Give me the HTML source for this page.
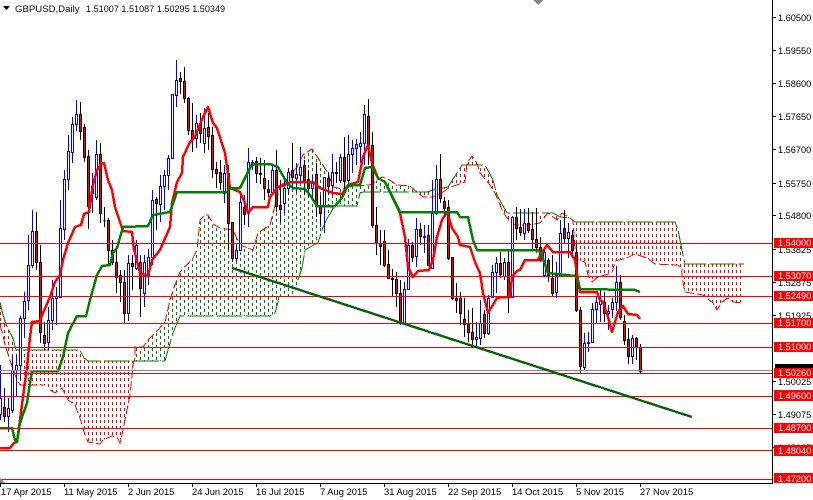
<!DOCTYPE html>
<html><head><meta charset="utf-8"><style>
html,body{margin:0;padding:0;background:#fff;width:813px;height:500px;overflow:hidden}
svg{display:block;font-family:"Liberation Sans",sans-serif}
</style></head><body>
<svg width="813" height="500" viewBox="0 0 813 500" xmlns="http://www.w3.org/2000/svg">
<defs>
<pattern id="pr" patternUnits="userSpaceOnUse" width="4" height="6"><rect x="0" y="0" width="1" height="3" fill="#f00"/></pattern>
<pattern id="pg" patternUnits="userSpaceOnUse" width="8" height="6"><rect x="0" y="0" width="1" height="3" fill="#008000"/><rect x="4" y="3" width="1" height="3" fill="#008000"/></pattern>
</defs>
<rect width="813" height="500" fill="#fff"/>
<g shape-rendering="crispEdges">
<polygon fill="url(#pr)" points="0,302 3,315 7,327 13,338 16,350 80,350 84,358 88,361 135,361 135,358 133,365 130,395 127,410 123,430 120,443 117,437 112,436 107,438 103,440 100,444 88,442 85,435 82,425 80,418 75,405 68,400 62,388 55,393 50,390 45,385 20,385 15,375 10,360 5,345 3,335 0,325"/>
<polygon fill="url(#pg)" points="135,347 143,347 148,340 158,330 165,322 170,300 175,285 180,272 193,258 197,250 200,220 205,215 208,215 213,224 220,228 233,230 240,245 253,250 258,233 270,225 273,213 280,187 297,167 303,155 312,149 318,158 328,173 333,187 342,189 353,186 370,185 382,177 390,180 397,185 410,186 417,192 363,192 360,193 357,206 335,206 328,217 323,227 318,243 312,246 305,250 302,268 298,280 295,296 279,296 278,302 275,313 270,316 180,316 177,323 173,333 168,350 165,361 135,361"/>
<polygon fill="url(#pr)" points="417,192 433,190 448,187 462,165 485,165 493,180 497,195 507,213 553,213 560,217 570,218 575,222 675,222 678,230 682,250 685,264 744,264 744,303 733,302 728,298 722,302 717,310 713,303 703,295 685,292 682,277 682,268 677,265 655,264 647,258 635,254 627,258 615,261 612,273 598,277 592,282 588,275 585,262 578,260 575,250 573,220 562,213 557,220 548,213 540,223 528,225 515,225 510,222 503,212 495,193 490,185 480,173 477,163 472,156 467,163 465,182 457,185 450,187 443,192 433,197 423,197"/>
<g fill="none" stroke="#008000" stroke-width="1" stroke-dasharray="26 3">
<polyline points="0,302 3,315 7,327 13,338 16,350 80,350 84,358 88,361 165,361 168,350 173,333 177,323 180,316 270,316 275,313 278,302 279,296"/>
<polyline points="298,280 302,268 305,250 312,246 318,243 323,227 328,217 335,206 357,206 360,193 363,192 427,192 433,190 448,187 462,165 485,165 493,180 497,195 507,213 553,213 560,217 570,218 575,222 675,222 678,230 682,250 685,264 744,264"/>
</g>
<g fill="none" stroke="#f00" stroke-width="1" stroke-dasharray="9 3">
<polyline points="0,325 3,335 5,345 10,360 15,375 20,385 45,385"/>
<polyline points="50,390 55,393 62,388 68,400 75,405 80,418 82,425 85,435 88,442 100,444 103,440 107,438 112,436 117,437 120,443 123,430 127,410 130,395 133,365 135,358 135,347 143,347 148,340 158,330 165,322 170,300 175,285 180,272 193,258 197,250 200,220 205,215 208,215 213,224 220,228 233,230 240,245 253,250 258,233 270,225 273,213 280,187 297,167 303,155 312,149 318,158 328,173 333,187 342,189 353,186 370,185 382,177 390,180 397,185 410,186 417,192 423,197 433,197 443,192 450,187 457,185 465,182 467,163 472,156 477,163 480,173 490,185 495,193 503,212 510,222 515,225 528,225 540,223 548,213 557,220 562,213 573,220 575,250 578,260 585,262 588,275 592,282 598,277 612,273 615,261 627,258 635,254 647,258 655,264 677,265 682,268 682,277 685,292 703,295 713,303 717,310 722,302 728,298 733,302 743,303"/>
</g>

<!-- blue candles -->
<path fill="none" stroke="#00f" d="M0.5 365V420M8.5 398V432M12.5 355V413M16.5 355V396M20.5 316V380M24.5 292V338M28.5 235V310M32.5 210V268M48.5 307V350M52.5 280V330M56.5 287V325M60.5 200V297M64.5 170V240M68.5 135V190M72.5 117V163M76.5 100V131M92.5 173V213M96.5 140V200M128.5 255V321M136.5 240V270M144.5 255V307M148.5 249V285M152.5 190V265M160.5 175V222M164.5 170V210M168.5 155V190M172.5 94V158M176.5 60V107M196.5 115V148M204.5 108V153M224.5 165V203M236.5 245V262M240.5 192V250M248.5 148V227M252.5 160V170M272.5 165V195M284.5 176V213M288.5 168V195M296.5 163V193M300.5 147V183M312.5 175V198M324.5 177V233M332.5 154V195M340.5 154V183M348.5 135V185M352.5 140V173M356.5 139V165M360.5 132V163M364.5 105V165M404.5 282V325M408.5 239V289M416.5 218V267M424.5 225V253M432.5 180V268M436.5 165V215M476.5 322V348M480.5 300V345M488.5 295V335M492.5 265V297M496.5 257V293M504.5 258V280M512.5 217V297M524.5 209V240M544.5 250V277M556.5 262V298M560.5 220V275M568.5 223V258M584.5 333V370M588.5 332V352M592.5 303V342M596.5 297V323M600.5 290V322M608.5 305V330M612.5 298V318M616.5 266V311M632.5 335V364"/>
<path fill="#fff" stroke="#00f" d="M-.5 398.5h2V414.5h-2zM7.5 408.5h2V416.5h-2zM11.5 370.5h2V410.5h-2zM15.5 365.5h2V370.5h-2zM19.5 318.5h2V365.5h-2zM23.5 301.5h2V318.5h-2zM27.5 265.5h2V300.5h-2zM31.5 231.5h2V265.5h-2zM47.5 320.5h2V342.5h-2zM51.5 298.5h2V320.5h-2zM55.5 296.5h2V298.5h-2zM59.5 228.5h2V297.5h-2zM63.5 179.5h2V229.5h-2zM67.5 151.5h2V179.5h-2zM71.5 124.5h2V152.5h-2zM75.5 114.5h2V124.5h-2zM91.5 186.5h2V193.5h-2zM95.5 154.5h2V197.5h-2zM127.5 263.5h2V313.5h-2zM135.5 245.5h2V268.5h-2zM143.5 262.5h2V293.5h-2zM147.5 257.5h2V275.5h-2zM151.5 200.5h2V257.5h-2zM159.5 186.5h2V204.5h-2zM163.5 175.5h2V186.5h-2zM167.5 158.5h2V175.5h-2zM171.5 94.5h2V158.5h-2zM175.5 80.5h2V95.5h-2zM195.5 123.5h2V138.5h-2zM203.5 128.5h2V143.5h-2zM223.5 173.5h2V193.5h-2zM235.5 250.5h2V258.5h-2zM239.5 202.5h2V250.5h-2zM247.5 162.5h2V213.5h-2zM251.5 162.5h2V165.5h-2zM271.5 170.5h2V192.5h-2zM283.5 188.5h2V203.5h-2zM287.5 172.5h2V188.5h-2zM295.5 174.5h2V178.5h-2zM299.5 167.5h2V175.5h-2zM311.5 183.5h2V188.5h-2zM323.5 177.5h2V205.5h-2zM331.5 172.5h2V185.5h-2zM339.5 157.5h2V180.5h-2zM347.5 154.5h2V180.5h-2zM351.5 148.5h2V154.5h-2zM355.5 144.5h2V148.5h-2zM359.5 143.5h2V146.5h-2zM363.5 114.5h2V143.5h-2zM403.5 289.5h2V323.5h-2zM407.5 245.5h2V289.5h-2zM415.5 229.5h2V256.5h-2zM423.5 236.5h2V237.5h-2zM431.5 213.5h2V268.5h-2zM435.5 179.5h2V213.5h-2zM475.5 337.5h2V339.5h-2zM479.5 323.5h2V338.5h-2zM487.5 298.5h2V333.5h-2zM491.5 272.5h2V297.5h-2zM495.5 263.5h2V272.5h-2zM503.5 262.5h2V276.5h-2zM511.5 217.5h2V297.5h-2zM523.5 223.5h2V233.5h-2zM543.5 252.5h2V275.5h-2zM555.5 275.5h2V292.5h-2zM559.5 233.5h2V275.5h-2zM567.5 232.5h2V238.5h-2zM583.5 343.5h2V367.5h-2zM587.5 342.5h2V343.5h-2zM591.5 309.5h2V342.5h-2zM595.5 302.5h2V309.5h-2zM599.5 300.5h2V304.5h-2zM607.5 311.5h2V313.5h-2zM611.5 302.5h2V309.5h-2zM615.5 282.5h2V302.5h-2zM631.5 338.5h2V356.5h-2z"/>

<!-- bear candles -->
<path fill="none" stroke="#000" d="M4.5 388V422M36.5 212V270M40.5 245V343M44.5 322V350M80.5 102V140M84.5 124V162M88.5 150V229M100.5 143V223M104.5 207V227M108.5 218V265M112.5 240V265M116.5 250V293M120.5 270V302M124.5 270V323M132.5 255V290M140.5 255V317M156.5 197V230M180.5 72V94M184.5 67V103M188.5 97V135M192.5 103V152M200.5 113V143M208.5 113V150M212.5 127V178M216.5 162V188M220.5 160V190M228.5 165V250M232.5 222V262M244.5 195V225M256.5 157V183M260.5 158V184M264.5 160V200M268.5 180V197M276.5 150V212M280.5 180V222M292.5 143V186M304.5 160V195M308.5 170V197M316.5 163V217M320.5 195V227M328.5 172V195M336.5 162V183M344.5 137V190M368.5 99V165M372.5 132V228M376.5 207V255M380.5 230V265M384.5 230V267M388.5 250V279M392.5 269V297M396.5 272V307M400.5 280V325M412.5 242V262M420.5 223V245M428.5 225V265M440.5 154V203M444.5 197V217M448.5 200V260M452.5 257V300M456.5 283V313M460.5 292V325M464.5 298V337M468.5 310V342M472.5 308V347M484.5 310V338M500.5 252V278M508.5 250V313M516.5 207V240M520.5 209V236M528.5 208V233M532.5 212V250M536.5 208V253M540.5 237V262M548.5 258V282M552.5 255V297M564.5 210V243M572.5 230V258M576.5 242V312M580.5 307V373M604.5 292V322M620.5 275V320M624.5 315V345M628.5 328V364M636.5 337V360M640.5 344V373"/>
<path fill="#f00" stroke="#000" d="M3.5 407.5h2V416.5h-2zM35.5 231.5h2V262.5h-2zM39.5 262.5h2V332.5h-2zM43.5 335.5h2V343.5h-2zM79.5 114.5h2V131.5h-2zM83.5 127.5h2V157.5h-2zM87.5 156.5h2V206.5h-2zM99.5 154.5h2V213.5h-2zM103.5 220.5h2V220.5h-2zM107.5 220.5h2V250.5h-2zM111.5 250.5h2V262.5h-2zM115.5 262.5h2V277.5h-2zM119.5 275.5h2V282.5h-2zM123.5 282.5h2V313.5h-2zM131.5 263.5h2V266.5h-2zM139.5 262.5h2V288.5h-2zM155.5 199.5h2V203.5h-2zM179.5 78.5h2V81.5h-2zM183.5 81.5h2V98.5h-2zM187.5 98.5h2V130.5h-2zM191.5 130.5h2V138.5h-2zM199.5 123.5h2V133.5h-2zM207.5 127.5h2V136.5h-2zM211.5 135.5h2V169.5h-2zM215.5 169.5h2V173.5h-2zM219.5 172.5h2V182.5h-2zM227.5 173.5h2V223.5h-2zM231.5 222.5h2V258.5h-2zM243.5 207.5h2V214.5h-2zM255.5 161.5h2V173.5h-2zM259.5 173.5h2V174.5h-2zM263.5 178.5h2V188.5h-2zM267.5 189.5h2V192.5h-2zM275.5 170.5h2V206.5h-2zM279.5 205.5h2V209.5h-2zM291.5 170.5h2V177.5h-2zM303.5 165.5h2V180.5h-2zM307.5 179.5h2V188.5h-2zM315.5 174.5h2V206.5h-2zM319.5 206.5h2V213.5h-2zM327.5 178.5h2V186.5h-2zM335.5 172.5h2V173.5h-2zM343.5 157.5h2V181.5h-2zM367.5 116.5h2V145.5h-2zM371.5 145.5h2V225.5h-2zM375.5 225.5h2V243.5h-2zM379.5 243.5h2V246.5h-2zM383.5 241.5h2V265.5h-2zM387.5 264.5h2V278.5h-2zM391.5 278.5h2V279.5h-2zM395.5 279.5h2V293.5h-2zM399.5 293.5h2V323.5h-2zM411.5 245.5h2V257.5h-2zM419.5 229.5h2V236.5h-2zM427.5 235.5h2V265.5h-2zM439.5 179.5h2V198.5h-2zM443.5 201.5h2V208.5h-2zM447.5 207.5h2V258.5h-2zM451.5 257.5h2V298.5h-2zM455.5 298.5h2V300.5h-2zM459.5 298.5h2V313.5h-2zM463.5 319.5h2V324.5h-2zM467.5 324.5h2V332.5h-2zM471.5 332.5h2V339.5h-2zM483.5 314.5h2V333.5h-2zM499.5 263.5h2V274.5h-2zM507.5 262.5h2V297.5h-2zM515.5 217.5h2V228.5h-2zM519.5 227.5h2V232.5h-2zM527.5 223.5h2V230.5h-2zM531.5 229.5h2V239.5h-2zM535.5 239.5h2V247.5h-2zM539.5 247.5h2V260.5h-2zM547.5 260.5h2V275.5h-2zM551.5 278.5h2V293.5h-2zM563.5 228.5h2V238.5h-2zM571.5 235.5h2V250.5h-2zM575.5 252.5h2V310.5h-2zM579.5 310.5h2V366.5h-2zM603.5 302.5h2V313.5h-2zM619.5 282.5h2V317.5h-2zM623.5 321.5h2V340.5h-2zM627.5 339.5h2V356.5h-2zM635.5 338.5h2V347.5h-2zM639.5 347.5h2V371.5h-2z"/>

<!-- tenkan -->
<polyline fill="none" stroke="#f00" stroke-width="2.5" stroke-linejoin="round" points="0,448 10,448 14,443 17,442 20,420 23,397 27,367 30,337 32,322 40,321 43,313 50,297 55,282 60,275 63,260 68,243 75,227 81,225 84,214 89,212 93,185 97,170 102,163 104,163 108,180 112,190 115,207 123,231 132,232 134,250 135,253 140,273 148,276 152,260 160,250 170,227 172,203 177,182 182,173 183,157 190,142 195,137 203,117 208,107 213,123 217,128 225,153 230,188 240,192 245,203 248,213 253,207 268,207 270,197 278,187 285,185 290,182 313,182 320,188 333,193 342,194 348,185 358,182 363,157 368,145 372,163 378,178 385,182 400,213 405,237 408,267 413,277 418,271 429,270 433,260 437,237 442,220 447,212 452,228 458,237 460,245 470,247 475,262 480,273 483,293 488,313 497,298 503,297 510,297 512,277 517,271 520,270 525,260 538,260 541,254 547,245 553,252 570,252 575,260 578,280 580,292 597,292 600,300 603,302 608,317 612,332 615,322 618,312 623,306 628,314 637,315 640,319"/>
<!-- kijun -->
<polyline fill="none" stroke="#008000" stroke-width="2.5" stroke-linejoin="round" points="0,428 12,428 15,440 17,442 20,423 27,403 30,383 32,371 58,371 63,357 68,333 77,316 86,316 90,300 97,275 102,266 110,265 113,253 117,248 123,227 148,226 153,215 170,212 177,192 227,192 230,188 240,188 252,164 270,164 278,167 287,183 293,188 305,189 310,195 317,206 335,206 342,198 348,185 360,185 365,168 372,167 378,178 385,182 400,212 457,212 460,217 468,217 473,240 477,250 538,250 541,253 548,273 575,276 578,280 580,289 635,290 640,292"/>

<!-- current price line -->
<rect x="0" y="370" width="772" height="1" fill="#778899"/>
<!-- horizontal levels -->
<path stroke="#f00" fill="none" d="M0 243.5H772M0 276.5H772M0 296.5H772M0 323.5H772M0 347.5H772M0 373.5H772M0 396.5H772M0 428.5H772M0 450.5H772M0 479.5H772"/>
<!-- trend line -->
<line x1="232" y1="268" x2="692" y2="417" stroke="#0a600a" stroke-width="2.4"/>

<!-- markers -->
<polygon points="533,0 543,0 538,5" fill="#778899"/>
<polygon points="0,478 5,483 0,483" fill="#778899"/>

<!-- axes -->
<rect x="772" y="0" width="1" height="484" fill="#000"/>
<rect x="0" y="483" width="772" height="1" fill="#000"/>
<path stroke="#000" fill="none" d="M773 17.5h3M773 50.5h3M773 83.5h3M773 116.5h3M773 149.5h3M773 183.5h3M773 215.5h3M773 249.5h3M773 282.5h3M773 315.5h3M773 381.5h3M773 414.5h3M773 447.5h3M0.5 484v3M64.5 484v3M128.5 484v3M192.5 484v3M256.5 484v3M320.5 484v3M384.5 484v3M448.5 484v3M512.5 484v3M576.5 484v3M640.5 484v3"/>
</g>

<!-- axis labels -->
<g font-size="9.2" fill="#000">
<text x="778" y="21">1.60500</text>
<text x="778" y="54">1.59550</text>
<text x="778" y="87">1.58600</text>
<text x="778" y="120">1.57650</text>
<text x="778" y="153">1.56700</text>
<text x="778" y="187">1.55750</text>
<text x="778" y="219">1.54800</text>
<text x="778" y="253">1.53825</text>
<text x="778" y="286">1.52875</text>
<text x="778" y="319">1.51925</text>
<text x="778" y="385">1.50025</text>
<text x="778" y="418">1.49075</text>
<text x="778" y="451">1.48125</text>
</g>
<rect x="775" y="364" width="38" height="5" fill="#000" shape-rendering="crispEdges"/>
<g shape-rendering="crispEdges" fill="#f00">
<rect x="774" y="238" width="39" height="10"/>
<rect x="774" y="271" width="39" height="10"/>
<rect x="774" y="291" width="39" height="10"/>
<rect x="774" y="318" width="39" height="10"/>
<rect x="774" y="342" width="39" height="10"/>
<rect x="774" y="368" width="39" height="10"/>
<rect x="774" y="390" width="39" height="11"/>
<rect x="774" y="423" width="39" height="10"/>
<rect x="774" y="445" width="39" height="11"/>
<rect x="774" y="473" width="39" height="10"/>
</g>
<g font-size="9.2" fill="#fff">
<text x="778" y="246">1.54000</text>
<text x="778" y="279">1.53070</text>
<text x="778" y="299">1.52490</text>
<text x="778" y="326">1.51700</text>
<text x="778" y="350">1.51000</text>
<text x="778" y="376">1.50260</text>
<text x="778" y="399">1.49600</text>
<text x="778" y="431">1.48700</text>
<text x="778" y="454">1.48040</text>
<text x="778" y="482">1.47200</text>
</g>

<!-- date labels -->
<g font-size="9.4" fill="#000">
<text x="1" y="495">17 Apr 2015</text>
<text x="64" y="495">11 May 2015</text>
<text x="128" y="495">2 Jun 2015</text>
<text x="192" y="495">24 Jun 2015</text>
<text x="256" y="495">16 Jul 2015</text>
<text x="320" y="495">7 Aug 2015</text>
<text x="384" y="495">31 Aug 2015</text>
<text x="448" y="495">22 Sep 2015</text>
<text x="512" y="495">14 Oct 2015</text>
<text x="576" y="495">5 Nov 2015</text>
<text x="640" y="495">27 Nov 2015</text>
</g>

<!-- header -->
<polygon points="3,6 10,6 6.5,10" fill="#000"/>
<text x="15" y="12" font-size="9.6" fill="#0a0a0a">GBPUSD,Daily</text>
<text x="86" y="12" font-size="9.1" fill="#0a0a0a">1.51007 1.51087 1.50295 1.50349</text>
</svg>
</body></html>
